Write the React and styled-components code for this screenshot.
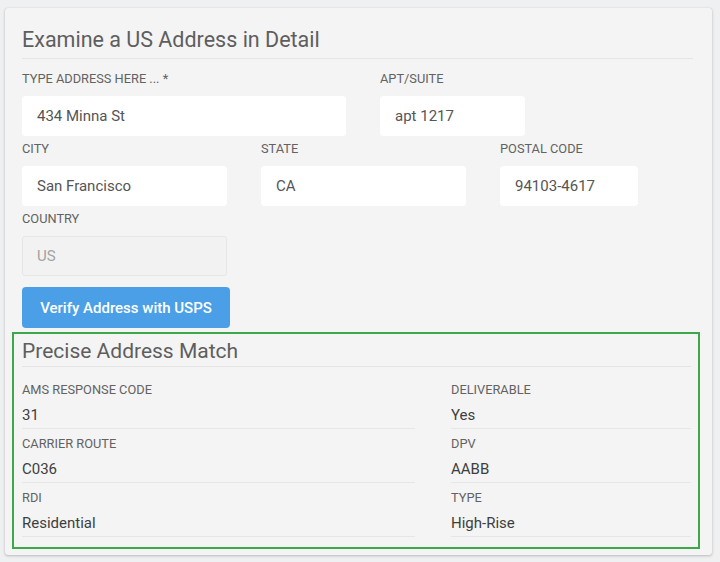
import React from 'react'
import styled, { createGlobalStyle } from 'styled-components'

const GlobalStyle = createGlobalStyle`
  * { box-sizing: border-box; }
  html, body {
    margin: 0;
    padding: 0;
    background: #eef0f2;
    font-family: Roboto, "Liberation Sans", Arial, sans-serif;
  }
`

const addressFields = [
  [
    { label: 'Type address here ... *', value: '434 Minna St', width: 324 },
    { label: 'Apt/Suite', value: 'apt 1217', width: 145 },
  ],
  [
    { label: 'City', value: 'San Francisco', width: 205 },
    { label: 'State', value: 'CA', width: 205 },
    { label: 'Postal Code', value: '94103-4617', width: 138 },
  ],
  [{ label: 'Country', value: 'US', width: 205, disabled: true }],
]

const results = [
  [
    { label: 'AMS Response Code', value: '31' },
    { label: 'Deliverable', value: 'Yes' },
  ],
  [
    { label: 'Carrier Route', value: 'C036' },
    { label: 'DPV', value: 'AABB' },
  ],
  [
    { label: 'RDI', value: 'Residential' },
    { label: 'Type', value: 'High-Rise' },
  ],
]

const App = () => {
  return (
    <Page>
      <GlobalStyle />
      <Card>
        <Title>Examine a US Address in Detail</Title>
        <Form>
          {addressFields.map((row, i) => (
            <FieldRow key={i}>
              {row.map((f) => (
                <Field key={f.label} $width={f.width}>
                  <Label>{f.label}</Label>
                  <Input $disabled={f.disabled}>{f.value}</Input>
                </Field>
              ))}
            </FieldRow>
          ))}
        </Form>
        <VerifyBtn>Verify Address with USPS</VerifyBtn>
        <Results>
          <ResultsTitle>Precise Address Match</ResultsTitle>
          <ResultGrid>
            {results.flat().map((r) => (
              <ResultItem key={r.label}>
                <Label>{r.label}</Label>
                <Value>{r.value}</Value>
              </ResultItem>
            ))}
          </ResultGrid>
        </Results>
      </Card>
    </Page>
  )
}

export default App

const Page = styled.div`
  width: 720px;
  height: 562px;
  padding: 8px 8px 7px 5px;
`
const Card = styled.div`
  width: 707px;
  height: 547px;
  background: #f4f4f4;
  border-radius: 3px;
  box-shadow: 0 1px 3px rgba(0, 0, 0, 0.22), 0 0 1px rgba(0, 0, 0, 0.15);
  padding: 18px 19px 0 17px;
  display: flex;
  flex-direction: column;
`
const Title = styled.div`
  font-size: 21.5px;
  font-weight: 400;
  color: #5e5e5e;
  line-height: 28px;
  padding-bottom: 4px;
  border-bottom: 1px solid #e4e4e4;
`
const Form = styled.div`
  display: flex;
  flex-direction: column;
  gap: 5px;
  margin-top: 12px;
`
const FieldRow = styled.div`
  display: flex;
  gap: 34px;
`
const Field = styled.div`
  width: ${(p) => p.$width}px;
  display: flex;
  flex-direction: column;
`
const Label = styled.div`
  font-size: 12.8px;
  line-height: 16px;
  text-transform: uppercase;
  color: #626262;
`
const Input = styled.div`
  margin-top: 9px;
  height: 40px;
  border-radius: 3px;
  padding: 0 14px;
  display: flex;
  align-items: center;
  font-size: 15px;
  background: ${(p) => (p.$disabled ? '#f2f2f2' : '#ffffff')};
  border: 1px solid ${(p) => (p.$disabled ? '#e6e6e6' : '#ffffff')};
  color: ${(p) => (p.$disabled ? '#a3a3a3' : '#555555')};
`
const VerifyBtn = styled.button`
  align-self: flex-start;
  margin-top: 11px;
  width: 208px;
  height: 41px;
  border: none;
  border-radius: 4px;
  background: #4a9fe6;
  color: #ffffff;
  font-family: Roboto, "Liberation Sans", Arial, sans-serif;
  font-size: 15px;
  font-weight: 500;
`
const Results = styled.div`
  margin: 4px -7px 0 -10px;
  border: 2px solid #3da84a;
  padding: 4px 7px 10px 8px;
`
const ResultsTitle = styled.div`
  font-size: 21px;
  color: #5e5e5e;
  line-height: 26px;
  padding-bottom: 2px;
  border-bottom: 1px solid #e4e4e4;
`
const ResultGrid = styled.div`
  display: grid;
  grid-template-columns: 393px 1fr;
  column-gap: 36px;
  margin-top: 7px;
`
const ResultItem = styled.div`
  padding: 7px 0 4px;
  border-bottom: 1px solid #e6e6e6;
  &:first-child, &:nth-child(2) {
    padding-top: 8px;
  }
`
const Value = styled.div`
  margin-top: 8px;
  font-size: 15px;
  line-height: 18px;
  color: #3e3e3e;
`
